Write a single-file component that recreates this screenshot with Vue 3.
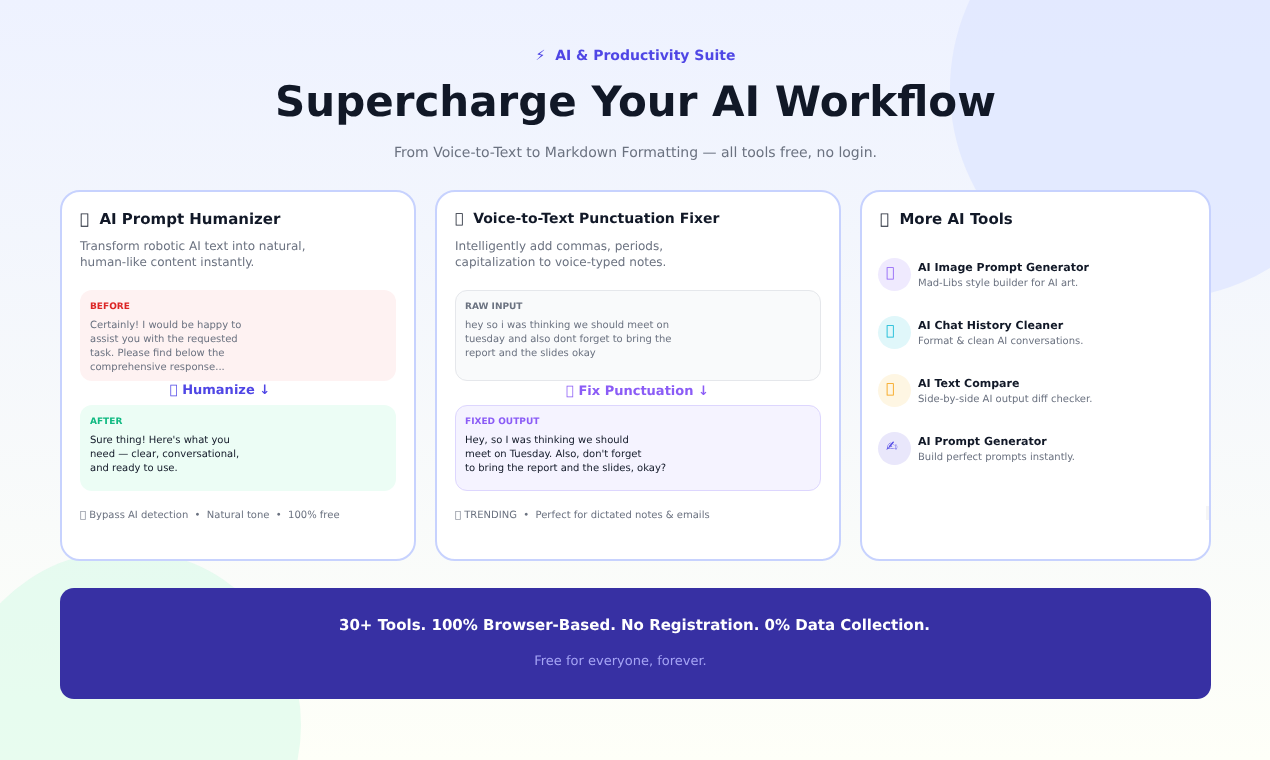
<script setup>
// &#xE000; has no glyph in the installed fonts: it draws the same empty box as the reference
const tools = [
  { icon: '\uE000', cls: 'violet', name: 'AI Image Prompt Generator', desc: 'Mad-Libs style builder for AI art.' },
  { icon: '\uE000', cls: 'cyan', name: 'AI Chat History Cleaner', desc: 'Format & clean AI conversations.' },
  { icon: '\uE000', cls: 'amber', name: 'AI Text Compare', desc: 'Side-by-side AI output diff checker.' },
  { icon: '✍', cls: 'indigo', name: 'AI Prompt Generator', desc: 'Build perfect prompts instantly.' }
]
</script>

<template>
  <div class="page">
    <div class="blob blob-top"></div>
    <div class="blob blob-bottom"></div>

    <header class="hero">
      <div class="eyebrow">⚡&nbsp; AI &amp; Productivity Suite</div>
      <h1>Supercharge Your AI Workflow</h1>
      <p>From Voice-to-Text to Markdown Formatting — all tools free, no login.</p>
    </header>

    <section class="cards">
      <article class="card">
        <h2>&#xE000;&nbsp; AI Prompt Humanizer</h2>
        <p class="lead">Transform robotic AI text into natural,<br />human-like content instantly.</p>
        <div class="panel before">
          <div class="tag">BEFORE</div>
          <div class="text">Certainly! I would be happy to<br />assist you with the requested<br />task. Please find below the<br />comprehensive response...</div>
        </div>
        <div class="action humanize">&#xE000; Humanize ↓</div>
        <div class="panel after">
          <div class="tag">AFTER</div>
          <div class="text">Sure thing! Here's what you<br />need — clear, conversational,<br />and ready to use.</div>
        </div>
        <div class="foot">&#xE000; Bypass AI detection &nbsp;•&nbsp; Natural tone &nbsp;•&nbsp; 100% free</div>
      </article>

      <article class="card">
        <h2 class="title-mid">&#xE000;&nbsp; Voice-to-Text Punctuation Fixer</h2>
        <p class="lead">Intelligently add commas, periods,<br />capitalization to voice-typed notes.</p>
        <div class="panel raw">
          <div class="tag">RAW INPUT</div>
          <div class="text">hey so i was thinking we should meet on<br />tuesday and also dont forget to bring the<br />report and the slides okay</div>
        </div>
        <div class="action fix">&#xE000; Fix Punctuation ↓</div>
        <div class="panel fixed">
          <div class="tag">FIXED OUTPUT</div>
          <div class="text">Hey, so I was thinking we should<br />meet on Tuesday. Also, don't forget<br />to bring the report and the slides, okay?</div>
        </div>
        <div class="foot">&#xE000; TRENDING &nbsp;•&nbsp; Perfect for dictated notes &amp; emails</div>
      </article>

      <article class="card">
        <h2>&#xE000;&nbsp; More AI Tools</h2>
        <ul class="tools">
          <li v-for="tool in tools" :key="tool.name" class="tool">
            <span class="bubble" :class="tool.cls">{{ tool.icon }}</span>
            <div class="tool-info">
              <div class="tool-name">{{ tool.name }}</div>
              <div class="tool-desc">{{ tool.desc }}</div>
            </div>
          </li>
        </ul>
        <div class="edge-mark"></div>
      </article>
    </section>

    <section class="banner">
      <div class="banner-title">30+ Tools. 100% Browser-Based. No Registration. 0% Data Collection.</div>
      <div class="banner-sub">Free for everyone, forever.</div>
    </section>
  </div>
</template>

<style>
html, body { margin: 0; }
</style>

<style scoped>
.page {
  position: relative;
  width: 1270px;
  height: 760px;
  overflow: hidden;
  box-sizing: border-box;
  padding: 47px 59px 0 60px;
  background: linear-gradient(180deg, #eef2ff 0%, #fefff8 100%);
  font-family: "DejaVu Sans", sans-serif;
  text-rendering: geometricPrecision;
}

.blob { position: absolute; border-radius: 50%; }
.blob-top { width: 420px; height: 420px; left: 950px; top: -121px; background: #e0e7ff; opacity: 0.85; }
.blob-bottom { width: 350px; height: 350px; left: -49px; top: 550px; background: #d1fae5; opacity: 0.5; }

/* own layers, so the text gets plain grey antialiasing like the reference */
.hero, .cards, .banner { will-change: transform; }

.hero { position: relative; text-align: center; }
.eyebrow { font-size: 14px; line-height: 18px; font-weight: 700; color: #4f46e5; }
h1 { margin: 11px 0 0; font-size: 42px; line-height: 52px; font-weight: 700; color: #111827; }
.hero p { margin: 15px 0 0; font-size: 14px; line-height: 20px; color: #6b7280; }

.cards {
  position: relative;
  display: grid;
  grid-template-columns: 356px 406px 351px;
  gap: 19px;
  margin-top: 27px;
}

.card {
  position: relative;
  box-sizing: border-box;
  height: 371px;
  padding: 18px;
  background: #fff;
  border: 2px solid #c7d2fe;
  border-radius: 20px;
}

h2 { margin: 0; font-size: 15px; line-height: 19px; font-weight: 700; color: #111827; }
h2.title-mid { font-size: 14px; line-height: 18px; padding-bottom: 1px; }
.lead { margin: 9px 0 0; font-size: 12px; line-height: 16px; color: #6b7280; }

.panel { box-sizing: border-box; border-radius: 12px; padding: 11px 10px 0; }
.before, .raw { margin-top: 20px; height: 91px; }
.after, .fixed { height: 86px; }
.before { background: #fef2f2; }
.after { background: #ecfdf5; }
.raw { background: #f9fafb; border: 1px solid #e5e7eb; padding: 10px 9px 0; }
.fixed { background: #f5f3ff; border: 1px solid #ddd6fe; padding: 10px 9px 0; }

.tag { font-size: 9px; line-height: 12px; font-weight: 700; }
.before .tag { color: #dc2626; }
.after .tag { color: #10b981; }
.raw .tag { color: #6b7280; }
.fixed .tag { color: #8b5cf6; }

.text { margin-top: 6px; font-size: 10px; line-height: 14px; color: #6b7280; }
.after .text, .fixed .text { color: #111827; }

.action { text-align: center; font-size: 13px; font-weight: 700; }
.humanize { color: #4f46e5; line-height: 20px; padding: 0 36px 4px 0; }
.fix { color: #8b5cf6; line-height: 22px; padding: 0 1px 2px 0; }

.foot { margin-top: 18px; font-size: 10px; line-height: 14px; color: #6b7280; }

.tools { list-style: none; margin: 29px 0 0 -2px; padding: 0; display: flex; flex-direction: column; gap: 25px; }
.tool { display: flex; align-items: center; gap: 7px; height: 33px; }
.bubble {
  flex: none;
  width: 33px;
  height: 33px;
  border-radius: 50%;
  display: flex;
  align-items: center;
  font-size: 14px;
  padding: 0 0 4px 8px;
  box-sizing: border-box;
}
.violet { background: #efeafe; color: #8b5cf6; }
.cyan { background: #e0f7fa; color: #06b6d4; }
.amber { background: #fef6e3; color: #f59e0b; }
.indigo { background: #e9e7fb; color: #4f46e5; }
.tool-info { padding-top: 2px; }
.tool-name { font-size: 11px; line-height: 15px; font-weight: 700; color: #111827; }
.tool-desc { margin-top: 1px; font-size: 10px; line-height: 15px; color: #6b7280; }

/* faint sliver just inside the card's right border */
.edge-mark { position: absolute; right: 0; top: 314px; width: 3px; height: 14px; background: #f5f5f6; }

.banner {
  position: relative;
  margin-top: 27px;
  height: 111px;
  box-sizing: border-box;
  padding-top: 27px;
  border-radius: 14px;
  background: #3730a3;
  text-align: center;
}
.banner-title { padding-right: 2px; font-size: 15px; line-height: 20px; font-weight: 700; color: #fff; }
.banner-sub { margin-top: 17px; padding-right: 30px; font-size: 13px; line-height: 20px; color: #a5a4f5; }
</style>
